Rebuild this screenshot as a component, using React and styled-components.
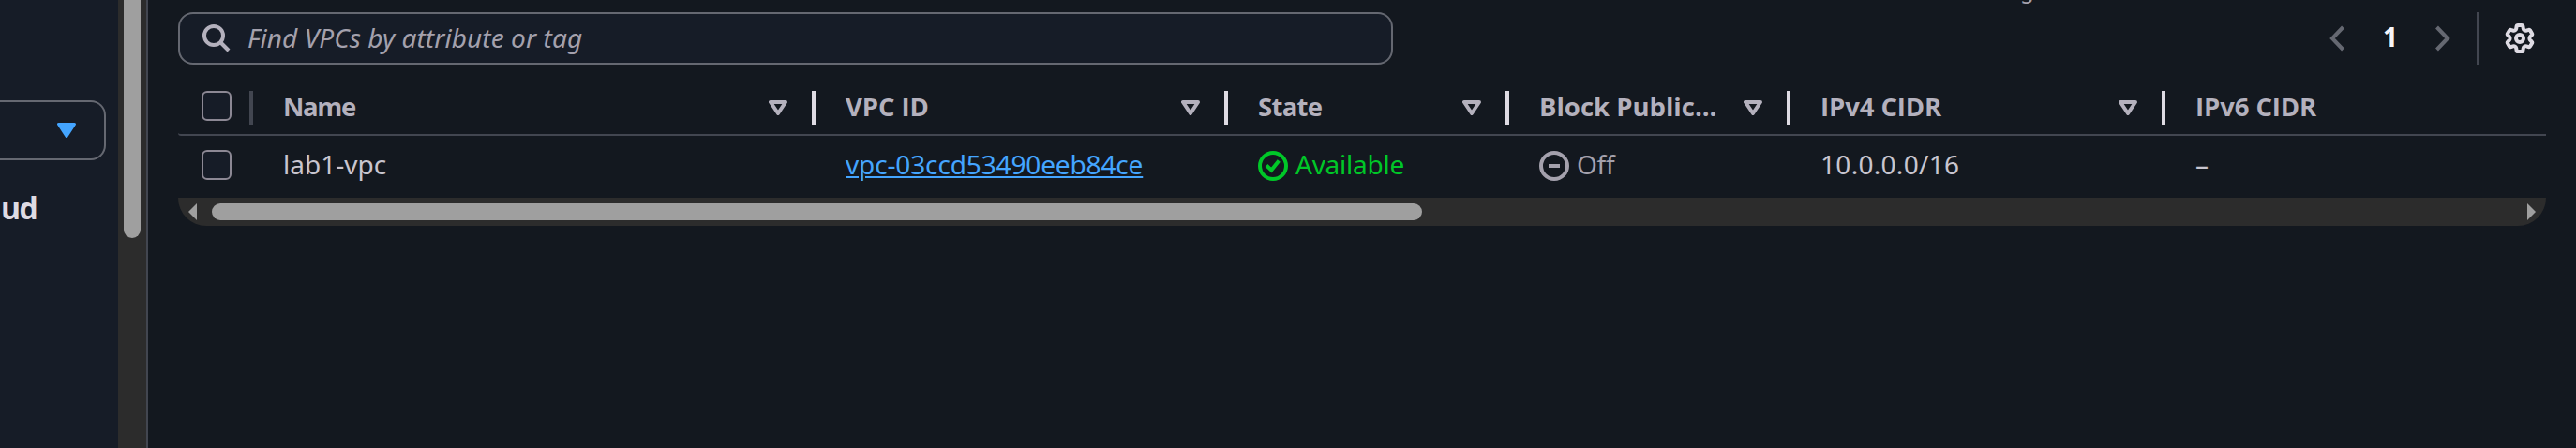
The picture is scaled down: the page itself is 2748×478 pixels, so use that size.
import React from "react";
import styled, { createGlobalStyle, css } from "styled-components";

const color = {
  page: "#13181f",
  panel: "#161c27",
  divider: "#424650",
  border: "#656871",
  checkbox: "#8c8894",
  heading: "#b4b1bd",
  text: "#c8c5cf",
  muted: "#a4a1ad",
  bright: "#dedbe3",
  link: "#44a5ff",
  success: "#00c728",
  track: "#2c2c2c",
  thumb: "#9f9f9f",
};

const GlobalStyle = createGlobalStyle`
  *, *::before, *::after { box-sizing: border-box; }
  body {
    margin: 0;
    background: ${color.page};
    color: ${color.text};
    font: 400 28px/40px "Noto Sans", "Open Sans", sans-serif;
    overflow: hidden;
  }
`;

const Page = styled.div`
  display: flex;
  width: 2748px;
  height: 478px;
  overflow: hidden;
`;

const Sidebar = styled.aside`
  flex: none;
  display: flex;
  width: 158px;
  background: ${color.panel};
  border-right: 2px solid ${color.divider};
`;

const SidebarContent = styled.div`
  width: 126px;
  padding-top: 107px;
`;

const Select = styled.div`
  display: flex;
  align-items: center;
  justify-content: flex-end;
  width: 113px;
  height: 64px;
  padding-right: 30px;
  border: 2px solid ${color.border};
  border-left: 0;
  border-radius: 0 16px 16px 0;
`;

const SidebarTitle = styled.div`
  margin: 29px 0 0 1px;
  font-family: "Open Sans", sans-serif;
  font-size: 32px;
  line-height: 44px;
  font-weight: 700;
  letter-spacing: -1.6px;
  color: ${color.bright};
`;

const VerticalTrack = styled.div`
  width: 30px;
  padding: 0 6px;
  background: ${color.track};
`;

const VerticalThumb = styled.div`
  height: 254px;
  border-radius: 0 0 9px 9px;
  background: ${color.thumb};
`;

const Main = styled.main`
  flex: 1;
  min-width: 0;
  padding: 0 32px;
`;

const StatusStrip = styled.div`
  height: 13px;
  padding-left: 1965px;
  overflow: hidden;
  font-size: 24px;
  line-height: 24px;
  color: ${color.muted};
`;

const StatusText = styled.div`
  margin-top: -23px;
`;

const Toolbar = styled.div`
  display: flex;
  align-items: center;
  justify-content: space-between;
  height: 56px;
`;

const SearchBox = styled.div`
  display: flex;
  align-items: center;
  gap: 18px;
  width: 1296px;
  height: 56px;
  padding-left: 24px;
  border: 2px solid ${color.border};
  border-radius: 16px;
  background: ${color.panel};
`;

const Placeholder = styled.span`
  padding-bottom: 2px;
  font-style: italic;
  letter-spacing: 0.08px;
  color: ${color.muted};
`;

const Pagination = styled.div`
  display: flex;
  align-items: center;
  height: 56px;
  padding-right: 12px;
`;

const PageNumber = styled.span`
  width: 97px;
  padding: 0 0 4px 1px;
  text-align: center;
  font-weight: 700;
  color: #f6f5f9;
`;

const ToolbarDivider = styled.span`
  width: 2px;
  height: 56px;
  margin: 0 28px;
  background: ${color.divider};
`;

const Row = styled.div`
  display: grid;
  grid-template-columns: 78px 600px 440px 300px 300px 400px 408px;
  align-items: center;
  ${(p) =>
    p.$header
      ? css`
          height: 76px;
          padding-top: 14px;
          border-bottom: 2px solid ${color.divider};
          border-bottom-left-radius: 3px;
        `
      : css`
          height: 66px;
          padding-bottom: 4px;
        `}
`;

const CheckCell = styled.div`
  display: flex;
  align-items: center;
  padding-left: 25px;
`;

const Checkbox = styled.span`
  width: 32px;
  height: 32px;
  border: 2px solid ${color.checkbox};
  border-radius: 6px;
  background: ${color.panel};
`;

const Resizer = styled.span`
  flex: none;
  width: 4px;
  height: 36px;
  background: ${(p) => (p.$subtle ? color.divider : color.bright)};
`;

const CheckResizer = styled(Resizer)`
  margin: 4px -2px 0 auto;
`;

const HeaderCell = styled.div`
  display: flex;
  align-items: center;
  height: 36px;
  margin-top: 4px;
  padding-left: 34px;
`;

const HeaderLabel = styled.span`
  flex: 1;
  padding-bottom: 3px;
  white-space: nowrap;
  font-family: "Open Sans", sans-serif;
  font-size: 27.5px;
  font-weight: 700;
  letter-spacing: ${(p) => p.$spacing || 0}px;
  color: ${color.heading};
`;

const HeaderResizer = styled(Resizer)`
  margin: 0 -2px 0 26px;
`;

const Cell = styled.div`
  display: flex;
  align-items: center;
  padding: 0 0 2px 34px;
  white-space: nowrap;
  letter-spacing: ${(p) => p.$spacing || 0}px;
`;

const Link = styled.a`
  color: ${color.link};
  letter-spacing: -0.14px;
  text-decoration: underline;
  text-decoration-thickness: 2px;
  text-underline-offset: 2px;
`;

const Status = styled.span`
  display: flex;
  align-items: center;
  gap: 8px;
  letter-spacing: -0.25px;
  color: ${(p) => (p.$success ? color.success : color.muted)};
`;

const StatusIcon = styled.svg`
  margin-top: 4px;
`;

const HorizontalTrack = styled.div`
  display: flex;
  align-items: center;
  height: 30px;
  padding: 0 11px;
  border-radius: 0 0 32px 32px;
  background: ${color.track};
`;

const HorizontalThumb = styled.div`
  width: 1291px;
  height: 18px;
  margin: 0 auto 0 16px;
  border-radius: 9px;
  background: ${color.thumb};
`;

const SearchIcon = () => (
  <svg width="30" height="30" viewBox="0 0 30 30" fill="none" stroke={color.heading} strokeWidth="4">
    <circle cx="12" cy="12" r="10" />
    <path d="M19 19L28 28" />
  </svg>
);

const SortIcon = () => (
  <svg width="20" height="16" viewBox="0 0 20 16" fill="none" stroke={color.heading} strokeWidth="4" strokeLinejoin="round">
    <path d="M2 2H18L10 14Z" />
  </svg>
);

const CaretIcon = () => (
  <svg width="20" height="16" viewBox="0 0 20 16" fill={color.link} stroke={color.link} strokeWidth="3" strokeLinejoin="round">
    <path d="M1.5 1.5H18.5L10 14.5Z" />
  </svg>
);

const ChevronIcon = ({ right }) => (
  <svg width="16" height="28" viewBox="0 0 16 28" fill="none" stroke={color.border} strokeWidth="4">
    <path d={right ? "M1.5 2L13 14L1.5 26" : "M14.5 2L3 14L14.5 26"} />
  </svg>
);

const GearIcon = () => (
  <svg width="32" height="32" viewBox="0 0 32 32" fill="none" stroke={color.bright} strokeWidth="4" strokeLinejoin="round">
    <path d="M14 2H18Q19.2 2 19.4 3.2L19.8 5.6Q20 6.8 21 7.4Q22 8 23.2 7.6L25.4 6.8Q26.4 6.4 27 7.4L29 10.8Q29.6 11.8 28.7 12.6L27.4 13.7Q26.4 14.6 26.4 16Q26.4 17.4 27.4 18.3L28.7 19.4Q29.6 20.2 29 21.2L27 24.6Q26.4 25.6 25.4 25.2L23.2 24.4Q22 24 21 24.6Q20 25.2 19.8 26.4L19.4 28.8Q19.2 30 18 30H14Q12.8 30 12.6 28.8L12.2 26.4Q12 25.2 11 24.6Q10 24 8.8 24.4L6.6 25.2Q5.6 25.6 5 24.6L3 21.2Q2.4 20.2 3.3 19.4L4.6 18.3Q5.6 17.4 5.6 16Q5.6 14.6 4.6 13.7L3.3 12.6Q2.4 11.8 3 10.8L5 7.4Q5.6 6.4 6.6 6.8L8.8 7.6Q10 8 11 7.4Q12 6.8 12.2 5.6L12.6 3.2Q12.8 2 14 2Z" />
    <circle cx="16" cy="16" r="4" />
  </svg>
);

const AvailableIcon = () => (
  <StatusIcon width="32" height="32" viewBox="0 0 32 32" fill="none" stroke="currentColor" strokeWidth="4">
    <circle cx="16" cy="16" r="14" />
    <path d="M9 15.5L14.3 20.5L22.3 10.5" />
  </StatusIcon>
);

const OffIcon = () => (
  <StatusIcon width="32" height="32" viewBox="0 0 32 32" fill="none" stroke="currentColor" strokeWidth="4">
    <circle cx="16" cy="16" r="14" />
    <path d="M10 16H22" />
  </StatusIcon>
);

const ArrowIcon = ({ right }) => (
  <svg width="9" height="18" viewBox="0 0 9 18" fill={color.thumb}>
    <path d={right ? "M0 0L9 9L0 18Z" : "M9 0L0 9L9 18Z"} />
  </svg>
);

const columns = [
  { label: "Name", spacing: -1.3 },
  { label: "VPC ID", spacing: -0.1 },
  { label: "State", spacing: -0.7 },
  { label: "Block Public...", spacing: 0 },
  { label: "IPv4 CIDR", spacing: -0.1 },
  { label: "IPv6 CIDR", spacing: -0.1, last: true },
];

export default function App() {
  return (
    <Page>
      <GlobalStyle />
      <Sidebar>
        <SidebarContent>
          <Select>
            <CaretIcon />
          </Select>
          <SidebarTitle>ud</SidebarTitle>
        </SidebarContent>
        <VerticalTrack>
          <VerticalThumb />
        </VerticalTrack>
      </Sidebar>
      <Main>
        <StatusStrip>
          <StatusText>g</StatusText>
        </StatusStrip>
        <Toolbar>
          <SearchBox>
            <SearchIcon />
            <Placeholder>Find VPCs by attribute or tag</Placeholder>
          </SearchBox>
          <Pagination>
            <ChevronIcon />
            <PageNumber>1</PageNumber>
            <ChevronIcon right />
            <ToolbarDivider />
            <GearIcon />
          </Pagination>
        </Toolbar>
        <Row $header>
          <CheckCell>
            <Checkbox />
            <CheckResizer $subtle />
          </CheckCell>
          {columns.map((column) => (
            <HeaderCell key={column.label}>
              <HeaderLabel $spacing={column.spacing}>{column.label}</HeaderLabel>
              {!column.last && <SortIcon />}
              {!column.last && <HeaderResizer />}
            </HeaderCell>
          ))}
        </Row>
        <Row>
          <CheckCell>
            <Checkbox />
          </CheckCell>
          <Cell>lab1-vpc</Cell>
          <Cell>
            <Link>vpc-03ccd53490eeb84ce</Link>
          </Cell>
          <Cell>
            <Status $success>
              <AvailableIcon />
              Available
            </Status>
          </Cell>
          <Cell>
            <Status>
              <OffIcon />
              Off
            </Status>
          </Cell>
          <Cell $spacing={0.3}>10.0.0.0/16</Cell>
          <Cell>–</Cell>
        </Row>
        <HorizontalTrack>
          <ArrowIcon />
          <HorizontalThumb />
          <ArrowIcon right />
        </HorizontalTrack>
      </Main>
    </Page>
  );
}
